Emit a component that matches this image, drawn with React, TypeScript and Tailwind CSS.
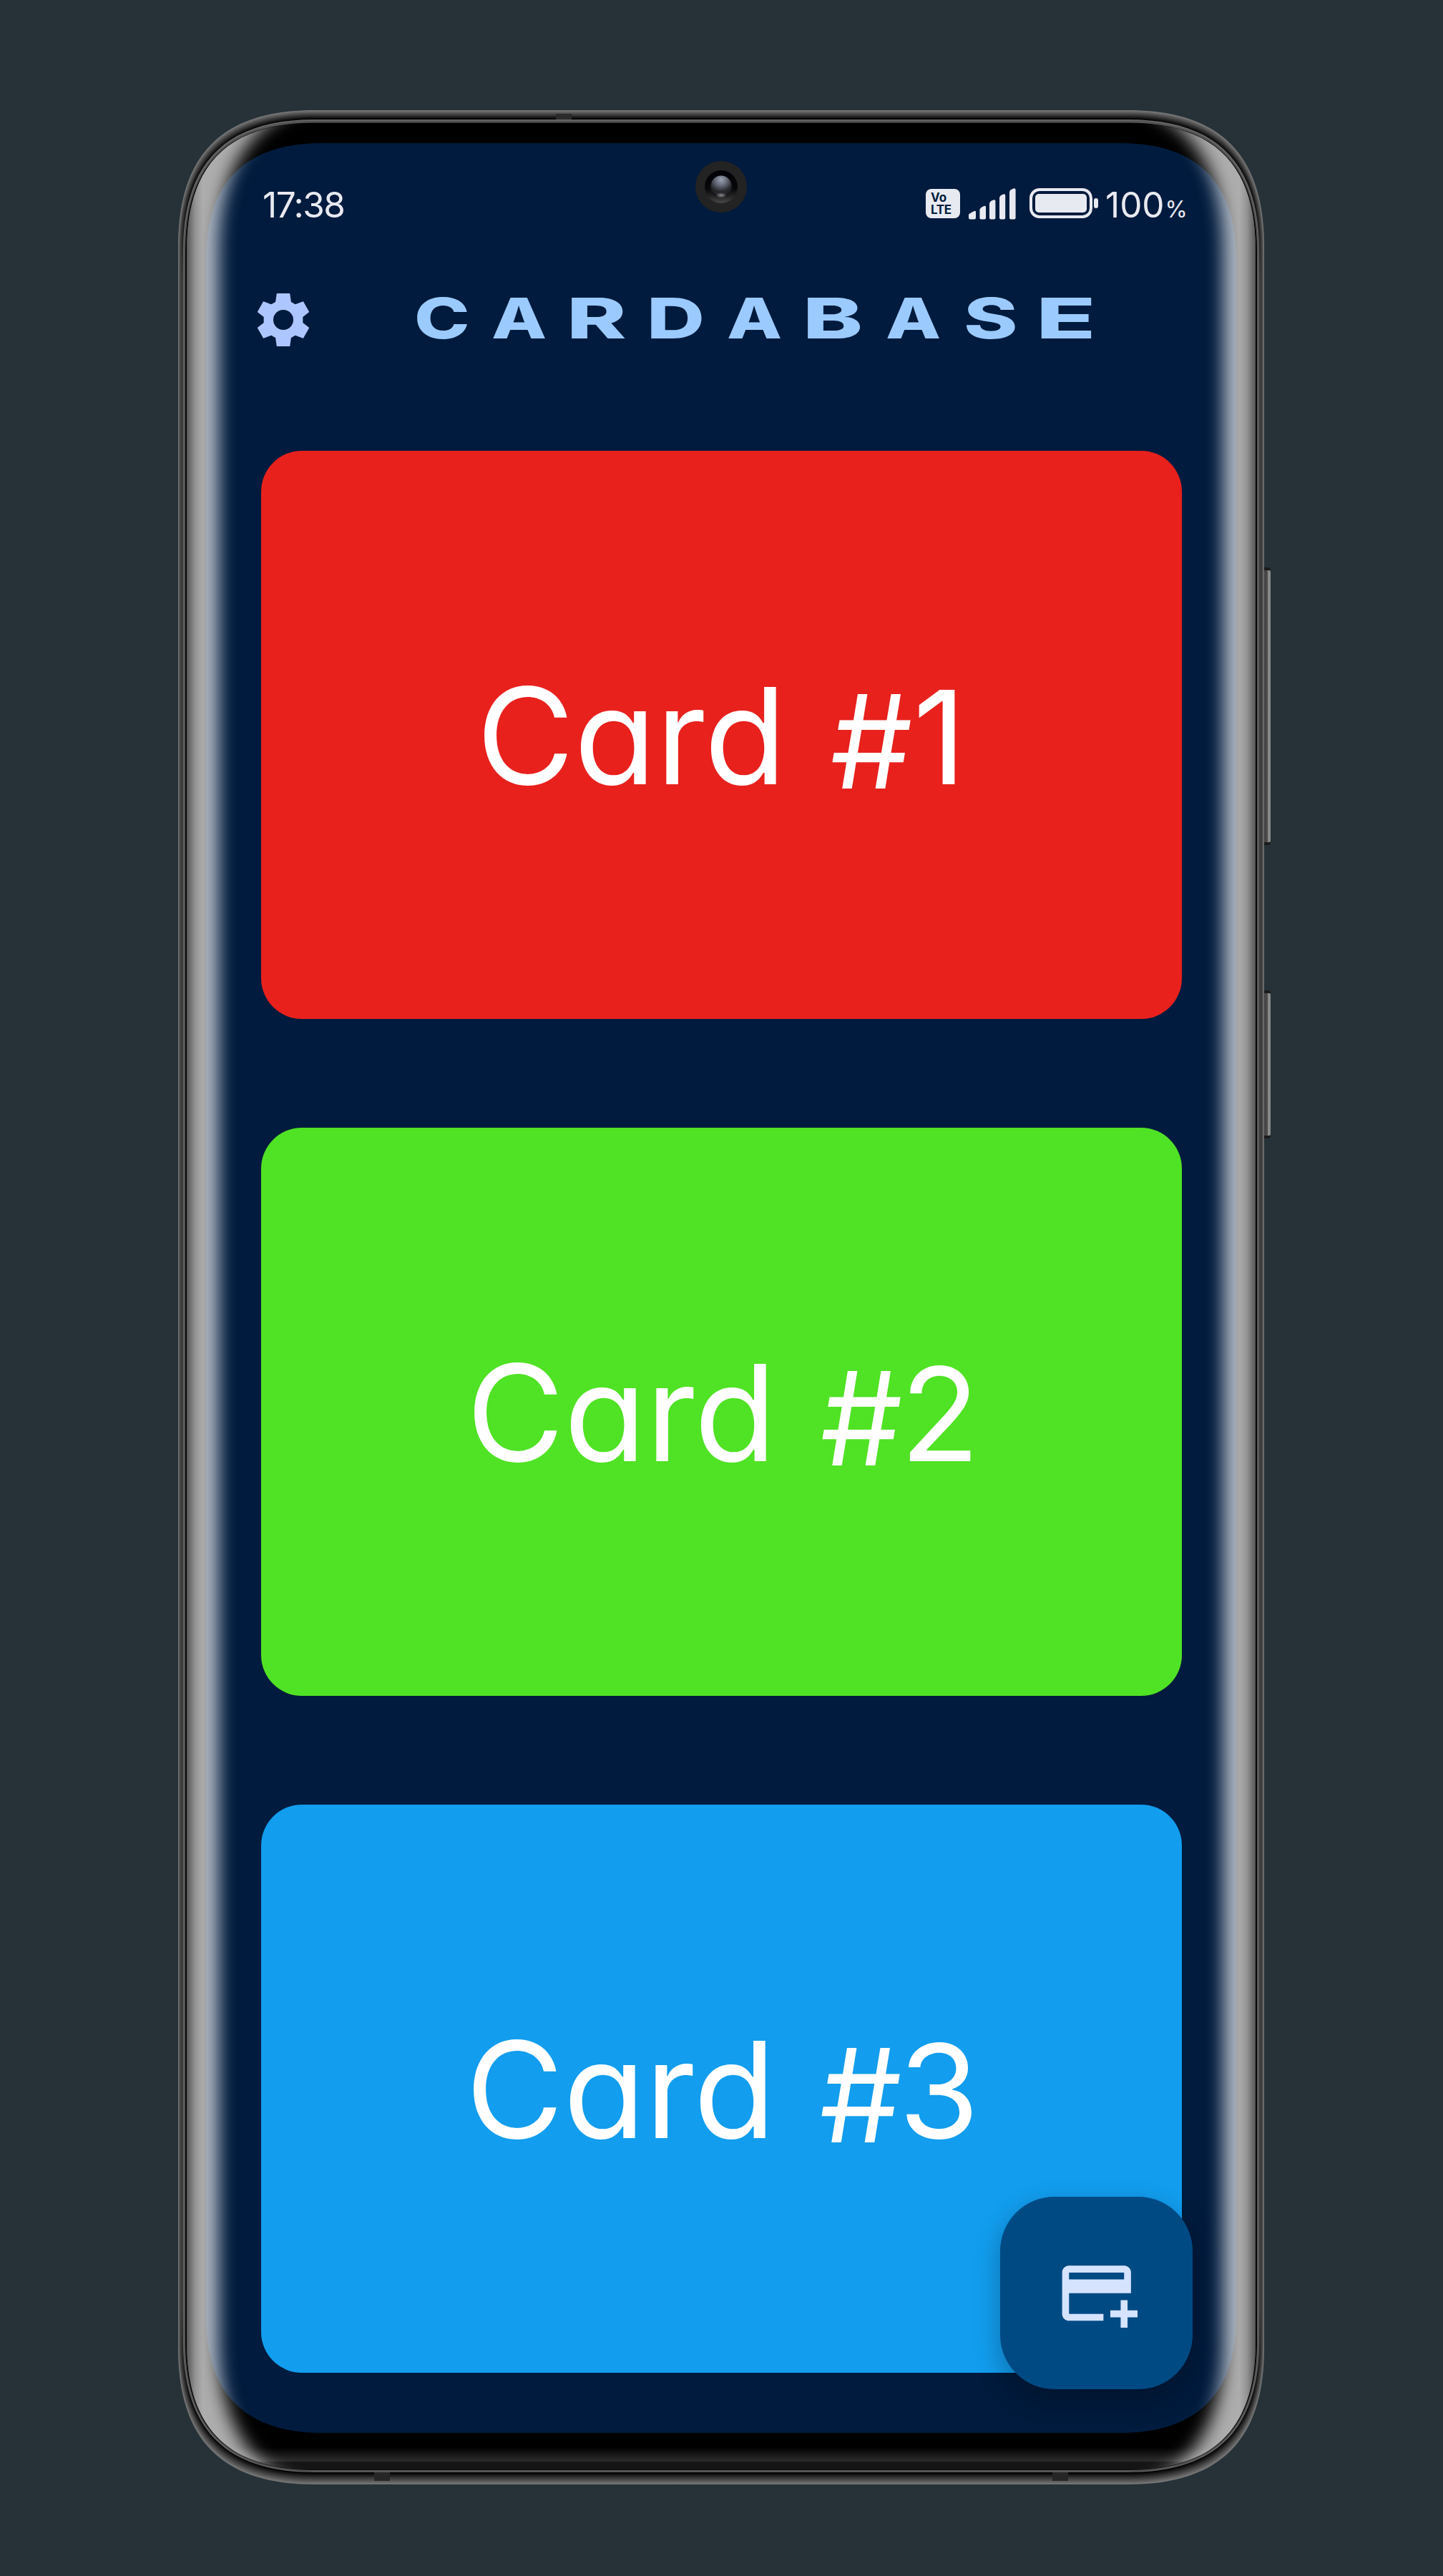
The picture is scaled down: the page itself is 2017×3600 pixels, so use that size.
const squircle = (x0: number, y0: number, x1: number, y1: number, d: number, k: number) =>
  `M${x0 + d} ${y0}H${x1 - d}C${x1 - k} ${y0} ${x1} ${y0 + k} ${x1} ${y0 + d}V${y1 - d}C${x1} ${y1 - k} ${x1 - k} ${y1} ${x1 - d} ${y1}H${x0 + d}C${x0 + k} ${y1} ${x0} ${y1 - k} ${x0} ${y1 - d}V${y0 + d}C${x0} ${y0 + k} ${x0 + k} ${y0} ${x0 + d} ${y0}Z`;

/* All bezel paths use the phone body's own 1518 x 3318 box. */
const BODY_STEPS = 13;
const GLASS = squircle(12, 18, 1506, 3297.5, 178, 58);

function Bezel() {
  const steps = Array.from({ length: BODY_STEPS }, (_, i) => i);
  return (
    <svg className="absolute inset-0 h-full w-full overflow-visible" viewBox="0 0 1518 3318" aria-hidden="true">
      <defs>
        {steps.map((i) => {
          const g = Math.round(119 - (119 * i) / (BODY_STEPS - 1));
          const side = Math.max(g, 61);
          return (
            <linearGradient key={i} id={`body${i}`} x1="0" y1="0" x2="0" y2="1">
              <stop offset="0.03" stopColor={`rgb(${g},${g},${g})`} />
              <stop offset="0.07" stopColor={`rgb(${side},${side},${side})`} />
              <stop offset="0.93" stopColor={`rgb(${side},${side},${side})`} />
              <stop offset="0.97" stopColor={`rgb(${g},${g},${g})`} />
            </linearGradient>
          );
        })}
        <linearGradient id="button" x1="0" y1="0" x2="1" y2="0">
          <stop offset="0" stopColor="#2c2c2c" />
          <stop offset="0.25" stopColor="#454545" />
          <stop offset="0.6" stopColor="#4b4b4b" />
          <stop offset="0.68" stopColor="#868686" />
          <stop offset="1" stopColor="#8c8c8c" />
        </linearGradient>
        <linearGradient id="chin" x1="0" y1="0" x2="0" y2="1">
          <stop offset="0" stopColor="#000" />
          <stop offset="0.6" stopColor="#2b2b2b" />
          <stop offset="0.68" stopColor="#151515" />
          <stop offset="1" stopColor="#141414" />
        </linearGradient>
        <clipPath id="chinClip"><path d={GLASS} /></clipPath>
      </defs>
      <rect x="1514" y="639" width="13" height="388" rx="4" fill="#1b1b1b" />
      <rect x="1516" y="643" width="11" height="380" rx="2" fill="url(#button)" />
      <rect x="1514" y="1230" width="13" height="207" rx="4" fill="#1b1b1b" />
      <rect x="1516" y="1234" width="11" height="199" rx="2" fill="url(#button)" />
      {steps.map((i) => {
        const t = i / BODY_STEPS;
        return (
          <path key={i} d={squircle(7 * t, 13 * t, 1518 - 7 * t, 3318 - 17 * t, 190 - 5 * t, 62 - t)} fill={`url(#body${i})`} />
        );
      })}
      <rect x="528" y="5" width="22" height="8" fill="#2b2b2b" />
      <rect x="274" y="3301" width="22" height="12" fill="#262626" />
      <rect x="1222" y="3301" width="22" height="12" fill="#262626" />
      <path d={squircle(7, 13, 1511, 3301, 183, 60)} fill="#646464" />
      <path d={squircle(8.6, 15.2, 1509.4, 3299.8, 182, 60)} fill="#3c3c3c" />
      <path d={squircle(9, 15.8, 1509, 3299.2, 181, 60)} fill="#5a5a5a" />
      <path d={squircle(10, 17.5, 1508, 3298, 180, 59)} fill="#050505" />
      <path d={GLASS} fill="#000" />
      <rect x="0" y="3266" width="1518" height="31.5" fill="url(#chin)" clipPath="url(#chinClip)" />
    </svg>
  );
}

/* Light caught by the curved long edges of the glass, over the bezel and the screen. */
function Reflection() {
  return (
    <svg className="pointer-events-none absolute inset-0 h-full w-full" viewBox="0 0 1518 3318" aria-hidden="true">
      <defs>
        <clipPath id="glass"><path d={GLASS} /></clipPath>
        <filter id="soft" x="-10%" y="-5%" width="120%" height="110%">
          <feGaussianBlur stdDeviation="12" />
        </filter>
        <mask id="edge" maskUnits="userSpaceOnUse" x="0" y="0" width="1518" height="3318">
          <rect width="1518" height="3318" fill="#fff" />
          <path d={squircle(57, -22, 1461, 3338, 220, 72)} fill="#000" filter="url(#soft)" />
        </mask>
        <linearGradient id="rim" gradientUnits="userSpaceOnUse" x1="12" y1="0" x2="1506" y2="0">
          <stop offset="0" stopColor="#000" stopOpacity="0.5" />
          <stop offset="0.008" stopColor="#000" stopOpacity="0.15" />
          <stop offset="0.015" stopColor="#000" stopOpacity="0" />
          <stop offset="0.985" stopColor="#000" stopOpacity="0" />
          <stop offset="0.992" stopColor="#000" stopOpacity="0.15" />
          <stop offset="1" stopColor="#000" stopOpacity="0.5" />
        </linearGradient>
      </defs>
      <g clipPath="url(#glass)">
        <rect width="1518" height="3318" fill="#fff" fillOpacity="0.68" mask="url(#edge)" />
        <rect width="1518" height="3318" fill="url(#rim)" />
      </g>
    </svg>
  );
}

function Camera() {
  return (
    <svg className="absolute left-[684px] top-[25px] h-[72px] w-[72px]" viewBox="0 0 72 72" aria-hidden="true">
      <defs>
        <linearGradient id="ring" x1="0" y1="0" x2="0" y2="1">
          <stop offset="0" stopColor="#020208" />
          <stop offset="0.55" stopColor="#07070a" />
          <stop offset="0.8" stopColor="#262626" />
          <stop offset="1" stopColor="#484848" />
        </linearGradient>
        <radialGradient id="lens" cx="0.5" cy="0.2" r="0.6">
          <stop offset="0" stopColor="#9aa3b2" />
          <stop offset="0.45" stopColor="#6b6f7e" />
          <stop offset="1" stopColor="#25262a" />
        </radialGradient>
        <radialGradient id="glint" cx="0.5" cy="0.5" r="0.5">
          <stop offset="0" stopColor="#8c8c8c" />
          <stop offset="1" stopColor="#8c8c8c" stopOpacity="0" />
        </radialGradient>
      </defs>
      <circle cx="36" cy="36" r="36" fill="#232323" />
      <circle cx="36" cy="36" r="23" fill="url(#ring)" />
      <circle cx="36" cy="36" r="15.5" fill="#17181c" />
      <circle cx="36" cy="34.5" r="14" fill="url(#lens)" />
      <ellipse cx="36" cy="48" rx="8" ry="4" fill="url(#glint)" />
    </svg>
  );
}

function StatusBar() {
  return (
    <div className="flex h-[172px] w-full items-center pl-[79px] text-[#e8eaf1]">
      <span className="w-[927px] text-[49.5px] leading-[60px] tracking-[-1.5px]">17:38</span>
      <div className="-mt-[3px] flex h-[41px] w-[48px] flex-col items-start rounded-[8px] bg-[#e8eaf1] pl-[7px] pt-[4px] text-[17px] font-bold leading-[16.5px] text-[#001b3d]">
        <span>Vo</span>
        <span className="tracking-[-0.3px]">LTE</span>
      </div>
      <svg className="-mt-[2px] ml-[12px] h-[44px] w-[66px]" viewBox="0 0 66 44" fill="#e8eaf1" aria-hidden="true">
        <path d="M0 37Q0 36 7 32.3Q10 31 10 33V41Q10 43.5 8 43.5H2Q0 43.5 0 41Z" />
        <path d="M15.4 30Q15.4 28 20 25.5Q24 23.6 24 26V41.5Q24 43.5 22 43.5H17.4Q15.4 43.5 15.4 41.5Z" />
        <path d="M29 21.5Q29 19 33 17Q37.4 15 37.4 18V41.5Q37.4 43.5 35.4 43.5H31Q29 43.5 29 41.5Z" />
        <path d="M43 14Q43 10.5 47 9Q51.2 7 51.2 10V41.5Q51.2 43.5 49.2 43.5H45Q43 43.5 43 41.5Z" />
        <path d="M57 6Q57 2.5 61 1.2Q65.6 -1 65.6 2.5V41.5Q65.6 43.5 63.6 43.5H59Q57 43.5 57 41.5Z" />
      </svg>
      <div className="-mt-[4px] ml-[19px] flex items-center">
        <div className="h-[42px] w-[88px] rounded-[14px] border-[4.5px] border-[#e8eaf1] p-[4px]">
          <div className="h-full w-full rounded-[5px] bg-[#e8eaf1]" />
        </div>
        <div className="ml-[2px] h-[14px] w-[6px] rounded-[3px] bg-[#e8eaf1]" />
      </div>
      <span className="ml-[10px] block whitespace-nowrap text-[49.5px] leading-[60px]">
        100<span className="ml-[1px] text-[32px] leading-none">%</span>
      </span>
    </div>
  );
}

function GearIcon() {
  return (
    <svg className="mt-[5px] h-[76px] w-[74px]" viewBox="-111 -114 222 228" aria-hidden="true">
      <path
        fill="#adc6ff"
        stroke="#adc6ff"
        strokeWidth="6"
        strokeLinejoin="round"
        fillRule="evenodd"
        d="M-25 -108H25L30 -73L50 -62L82 -74L105 -34L79 -14V14L105 34L82 74L50 62L30 73L25 108H-25L-30 73L-50 62L-82 74L-105 34L-79 14V-14L-105 -34L-82 -74L-50 -62L-30 -73ZM0 -45A45 45 0 1 0 0 45A45 45 0 1 0 0 -45Z"
      />
    </svg>
  );
}

function Header() {
  const letter = "inline-block origin-left";
  return (
    <header className="flex h-[144px] items-center pl-[71px]">
      <GearIcon />
      <h1 className="ml-[145.7px] flex whitespace-nowrap text-[79px] font-extrabold leading-[96px] text-[#9bcaff]">
        <span className={`${letter} w-[108px] scale-x-[1.32]`}>C</span>
        <span className={`${letter} w-[105.5px] scale-x-[1.27]`}>A</span>
        <span className={`${letter} w-[112.1px] scale-x-[1.6]`}>R</span>
        <span className={`${letter} w-[111.4px] scale-x-[1.42]`}>D</span>
        <span className={`${letter} w-[105.9px] scale-x-[1.27]`}>A</span>
        <span className={`${letter} w-[116.1px] scale-x-[1.6]`}>B</span>
        <span className={`${letter} w-[109px] scale-x-[1.27]`}>A</span>
        <span className={`${letter} w-[101.3px] scale-x-[1.45]`}>S</span>
        <span className={`${letter} w-[79px] scale-x-[1.74]`}>E</span>
      </h1>
    </header>
  );
}

const cards = [
  { number: "1", surface: "bg-[#e8211d] pl-[301px]", hash: "tracking-[0.5px]" },
  { number: "2", surface: "bg-[#50e224] pl-[287px]", hash: "tracking-[-3.5px]" },
  { number: "3", surface: "bg-[#129dee] pl-[286px]", hash: "tracking-[-4.5px]" },
];

function AddCardButton() {
  return (
    <button
      type="button"
      aria-label="Add card"
      className="absolute left-[1110px] top-[2870px] flex h-[269px] w-[269px] items-center justify-center rounded-[76px] bg-[#004a84] shadow-[0_14px_34px_2px_rgba(0,0,0,0.26)]"
    >
      <svg className="h-[115.5px] w-[115.5px]" viewBox="0 0 24 24" fill="#d5e3ff" aria-hidden="true">
        <path d="M20 4H4c-1.11 0-1.99.89-1.99 2L2 18c0 1.11.89 2 2 2h10v-2H4v-6h18V6c0-1.11-.89-2-2-2zm0 4H4V6h16v2zm4 9v2h-3v3h-2v-3h-3v-2h3v-3h2v3h3z" />
      </svg>
    </button>
  );
}

export default function App() {
  return (
    <div className="h-[3600px] w-[2017px] overflow-hidden bg-[#263238] pl-[249px] pt-[154px] font-['Inter',sans-serif]">
      <div className="relative h-[3318px] w-[1518px] pl-[39px] pt-[46px]">
        <Bezel />
        <main
          className="relative h-[3200px] w-[1440px] overflow-hidden bg-[#001b3d]"
          style={{ clipPath: `path("${squircle(0, 0, 1440, 3200, 162, 55)}")` }}
        >
          <Camera />
          <StatusBar />
          <Header />
          <section className="mt-[114px] flex flex-col gap-[152px] pl-[77px]">
            {cards.map((card) => (
              <article
                key={card.number}
                className={`flex h-[794px] w-[1287px] items-center rounded-[57px] pt-[4px] text-white ${card.surface}`}
              >
                <h2 className="whitespace-pre text-[187px] font-normal leading-[220px] [font-feature-settings:'cv11'] [word-spacing:9px]">
                  Card <span className={`relative top-[6px] text-[182px] ${card.hash}`}>#</span>
                  <span className="text-[182px]">{card.number}</span>
                </h2>
              </article>
            ))}
          </section>
          <AddCardButton />
        </main>
        <Reflection />
      </div>
    </div>
  );
}
